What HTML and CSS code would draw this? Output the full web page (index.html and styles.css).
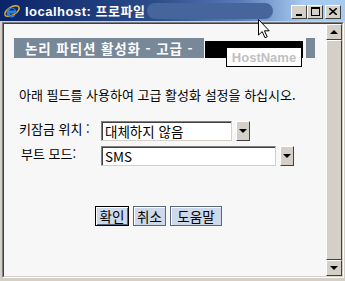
FILE: index.html
```html
<!DOCTYPE html>
<html lang="ko">
<head>
    <meta charset="UTF-8">
    <meta name="viewport" content="width=device-width, initial-scale=1.0">
    <title>localhost: 프로파일</title>
    <link rel="stylesheet" href="styles.css">
</head>
<body>
    <div class="window">
        <!-- Title bar -->
        <div class="titlebar">
            <svg class="ie-icon" width="18" height="18" viewBox="0 0 18 18">
                <ellipse cx="9" cy="9" rx="8" ry="4" fill="none" stroke="#e8b020" stroke-width="1.5" transform="rotate(-30 9 9)"/>
                <path d="M4 10 H13.5 A5 5 0 1 0 12.5 13.5 L10.5 12.5 A2.8 2.8 0 0 1 6.4 11.6 H13.5 V10" fill="#2f7fd8"/>
                <path d="M6.3 8.4 A2.8 2.8 0 0 1 11.6 8.4 Z" fill="#0a246a"/>
            </svg>
            <span class="title">localhost: 프로파일</span>
            <span class="title-blur"></span>
            <div class="caption-buttons">
                <span class="cap-btn">
                    <svg width="8" height="8" viewBox="0 0 8 8"><rect x="1" y="6" width="6" height="2" fill="#000"/></svg>
                </span>
                <span class="cap-btn">
                    <svg width="9" height="9" viewBox="0 0 9 9"><rect x="0.5" y="0.5" width="8" height="8" fill="none" stroke="#000"/><rect x="0" y="0" width="9" height="2" fill="#000"/></svg>
                </span>
                <span class="cap-btn close">
                    <svg width="8" height="7" viewBox="0 0 8 7"><path d="M0 0 L8 7 M8 0 L0 7" stroke="#000" stroke-width="1.6"/></svg>
                </span>
            </div>
        </div>

        <!-- Client area -->
        <div class="client">
            <div class="client-inner">
                <div class="page">
                    <div class="banner">
                        <span class="banner-title">논리 파티션 활성화 - 고급 -</span>
                        <span class="host-mask"><span class="host-name">HostName</span></span>
                        <span class="banner-end"></span>
                    </div>

                    <p class="intro">아래 필드를 사용하여 고급 활성화 설정을 하십시오.</p>

                    <div class="field-row">
                        <span class="label">키잠금 위치 :</span>
                        <span class="select select-short">대체하지 않음</span>
                        <span class="drop-btn"><span class="arrow"></span></span>
                    </div>
                    <div class="field-row">
                        <span class="label label-boot">부트 모드:</span>
                        <span class="select select-long">SMS</span>
                        <span class="drop-btn"><span class="arrow"></span></span>
                    </div>

                    <div class="actions">
                        <button class="btn btn-default">확인</button>
                        <button class="btn">취소</button>
                        <button class="btn btn-help">도움말</button>
                    </div>
                </div>

                <!-- Scrollbar -->
                <div class="scrollbar">
                    <span class="scroll-btn"><span class="arrow arrow-up"></span></span>
                    <span class="scroll-thumb"></span>
                    <span class="scroll-btn"><span class="arrow"></span></span>
                </div>
            </div>
        </div>

        <!-- Mouse pointer -->
        <svg class="cursor" width="12" height="20" viewBox="0 0 12 20">
            <path d="M0.5 0.5 V16 L4.2 12.6 L7 18.8 L9.2 17.8 L6.5 11.8 H11.2 Z" fill="#fff" stroke="#000" stroke-width="1"/>
        </svg>
    </div>
</body>
</html>
```

FILE: styles.css
```css
body {
    margin: 0;
    padding: 0;
    background-color: #d4d0c8;
    font-family: "Noto Sans CJK KR", sans-serif;
}
.window {
    position: relative;
    width: 345px;
    height: 281px;
    background-color: #d4d0c8;
    display: flex;
    flex-direction: column;
}
.titlebar {
    height: 21px;
    display: flex;
    align-items: center;
    background: linear-gradient(to right, #0a246a 0%, #2c4c88 45%, #5a7cb8 70%, #a6caf0 88%, #a6caf0 100%);
    color: white;
}
.ie-icon {
    margin-left: 3px;
    margin-right: 4px;
}
.title {
    font-family: "Liberation Sans", "Noto Sans CJK KR", sans-serif;
    font-weight: bold;
    font-size: 13px;
    letter-spacing: 0.5px;
    white-space: nowrap;
}
.title-blur {
    width: 126px;
    height: 16px;
    margin-left: 2px;
    border-radius: 8px;
    background-color: #46659c;
}
.caption-buttons {
    display: flex;
    margin-left: auto;
    margin-right: 4px;
    margin-top: 2px;
}
.cap-btn {
    width: 14px;
    height: 12px;
    display: flex;
    align-items: center;
    justify-content: center;
    background-color: #d4d0c8;
    border: 1px solid;
    border-color: #fff #404040 #404040 #fff;
}
.cap-btn.close {
    margin-left: 2px;
}
.client {
    margin: 1px 1px 3px 2px;
    flex: 1;
    display: flex;
    border: 1px solid;
    border-color: #808080 #fff #fff #808080;
}
.client-inner {
    flex: 1;
    display: flex;
    border: 1px solid;
    border-color: #404040 #d4d0c8 #d4d0c8 #404040;
}
.page {
    flex: 1;
    background-color: #f7f7f7;
    padding: 14px 0 0 10px;
}
.banner {
    display: flex;
    align-items: flex-start;
    height: 20px;
}
.banner-title {
    height: 20px;
    width: 190px;
    background-color: #778899;
    color: white;
    font-weight: bold;
    font-size: 13.5px;
    letter-spacing: 0.9px;
    line-height: 20px;
    padding-left: 11px;
    box-sizing: border-box;
    white-space: nowrap;
    overflow: hidden;
}
.host-mask {
    position: relative;
    width: 98px;
    height: 17px;
    margin-top: 3px;
    margin-left: 1px;
    background-color: #000;
}
.host-name {
    position: absolute;
    left: 21px;
    top: 6px;
    width: 74px;
    height: 18px;
    background-color: #fff;
    border: 1px solid #000;
    color: #c0c0c0;
    font-family: "Liberation Sans", sans-serif;
    font-weight: bold;
    font-size: 13px;
    line-height: 19px;
    text-align: center;
}
.banner-end {
    width: 9px;
    height: 20px;
    margin-left: 3px;
    background-color: #778899;
}
.intro {
    margin: 28px 0 0 5px;
    font-size: 13px;
    color: #000;
    line-height: 18px;
}
.field-row {
    display: flex;
    align-items: flex-start;
    margin-left: 5px;
    margin-top: 5px;
}
.intro + .field-row {
    margin-top: 17px;
}
.label {
    width: 82px;
    margin-top: 1px;
    font-size: 13px;
    line-height: 14px;
}
.label-boot {
    padding-left: 2px;
    width: 80px;
}
.select {
    height: 20px;
    box-sizing: border-box;
    background-color: #fff;
    border: 1px solid;
    border-color: #808080 #d4d0c8 #d4d0c8 #808080;
    box-shadow: inset 1px 1px #404040;
    font-size: 13.5px;
    line-height: 18px;
    padding-left: 3px;
    white-space: nowrap;
}
.select-short {
    width: 131px;
}
.select-long {
    width: 175px;
}
.drop-btn {
    width: 14px;
    height: 20px;
    margin-left: 4px;
    box-sizing: border-box;
    display: flex;
    align-items: center;
    justify-content: center;
    background-color: #d4d0c8;
    border: 1px solid;
    border-color: #fff #404040 #404040 #fff;
}
.arrow {
    width: 0;
    height: 0;
    border-left: 4px solid transparent;
    border-right: 4px solid transparent;
    border-top: 4px solid #000;
}
.arrow-up {
    border-top: none;
    border-bottom: 4px solid #000;
}
.actions {
    display: flex;
    gap: 4px;
    margin: 40px 0 0 81px;
}
.btn {
    width: 33px;
    height: 20px;
    padding: 0;
    background-color: #cdd8e8;
    border: 1px solid #56687a;
    box-shadow: inset 1px 1px #fff;
    font-family: "Noto Sans CJK KR", sans-serif;
    font-size: 13.5px;
    line-height: 18px;
    color: #000;
}
.btn-default {
    width: 34px;
    border: 1px solid #000;
    box-shadow: inset 1px 1px #fff, inset -1px -1px #56687a;
}
.btn-help {
    width: 52px;
}
.scrollbar {
    width: 16px;
    display: flex;
    flex-direction: column;
    background-color: #d4d0c8;
}
.scroll-btn {
    height: 16px;
    box-sizing: border-box;
    display: flex;
    align-items: center;
    justify-content: center;
    background-color: #d4d0c8;
    border: 1px solid;
    border-color: #fff #404040 #404040 #fff;
}
.scroll-thumb {
    flex: 1;
    background-color: #d4d0c8;
    border: 1px solid;
    border-color: #fff #404040 #404040 #fff;
}
.cursor {
    position: absolute;
    left: 258px;
    top: 19px;
}
```
